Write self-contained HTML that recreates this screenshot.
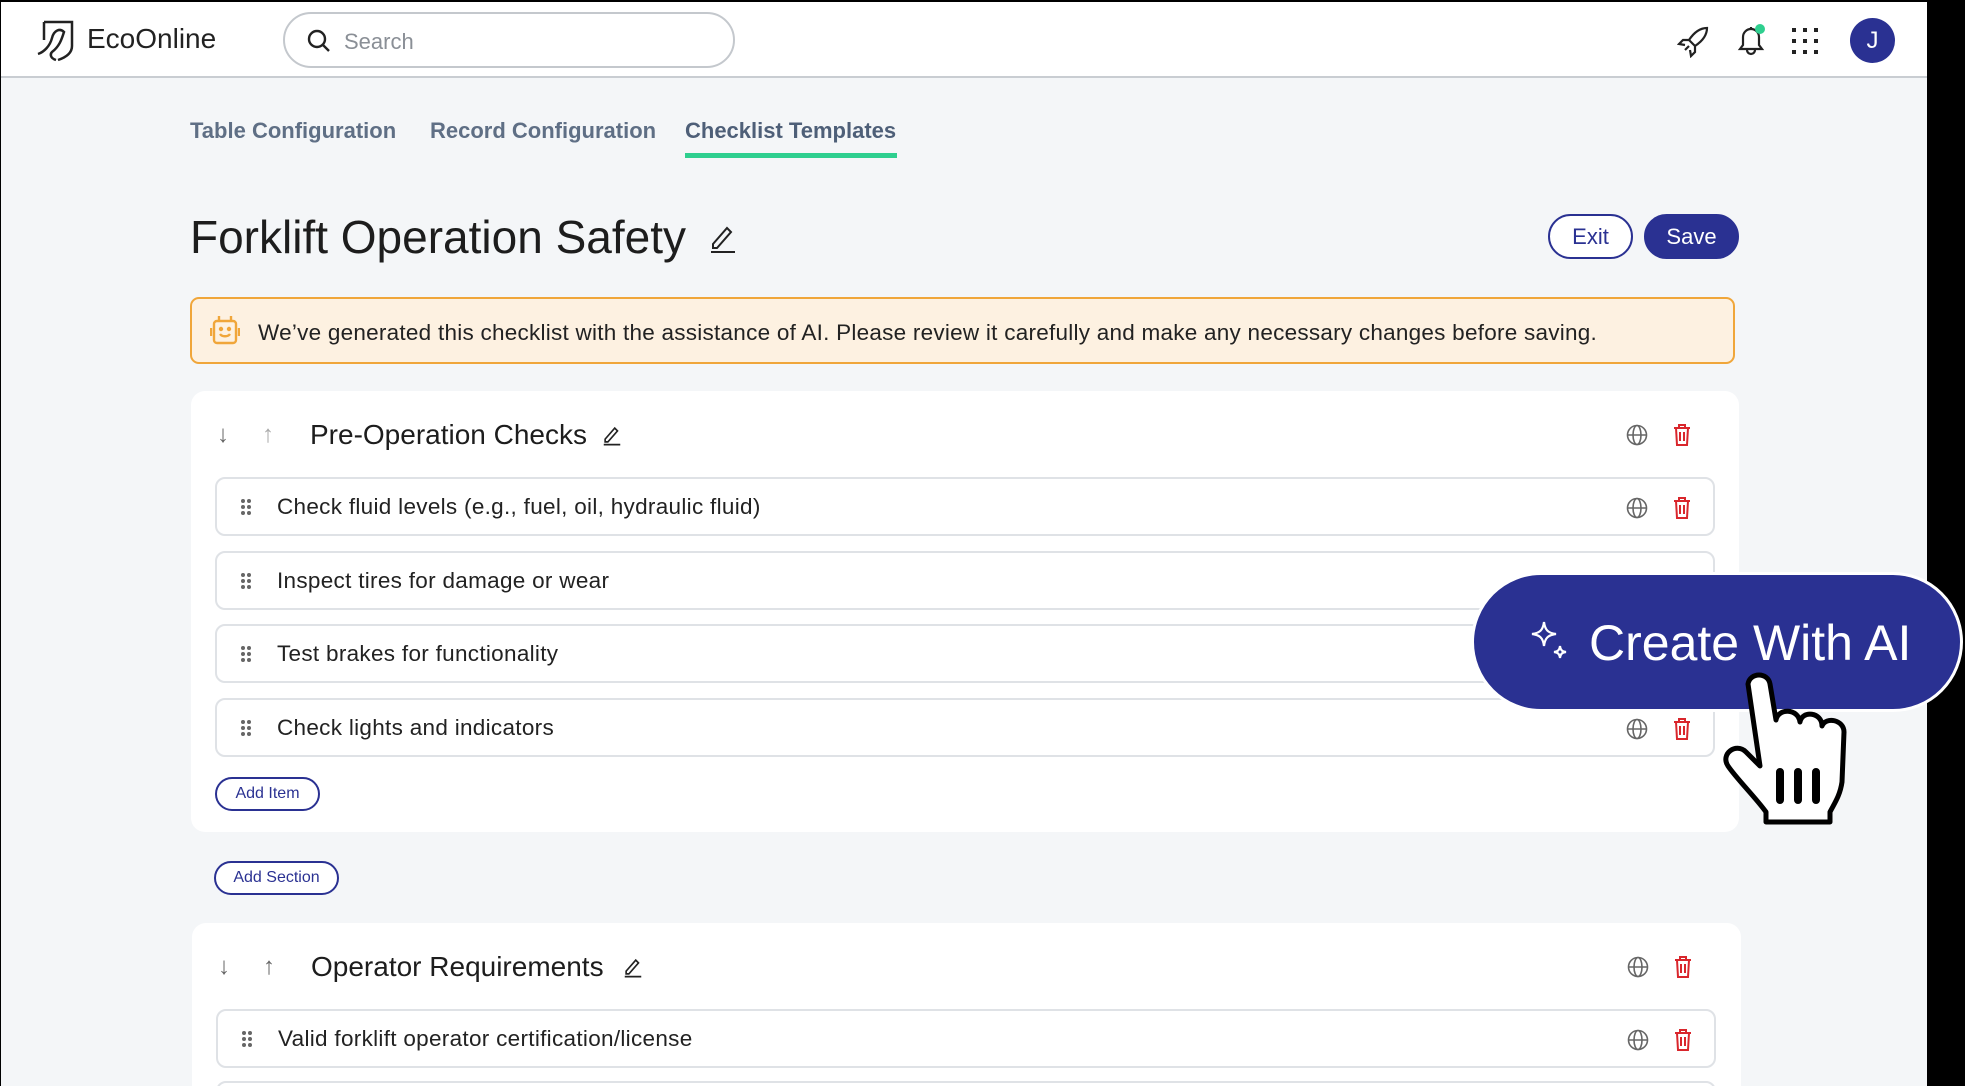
<!DOCTYPE html>
<html><head><meta charset="utf-8"><style>
*{box-sizing:border-box;margin:0;padding:0}
body{width:1965px;height:1086px;overflow:hidden;background:#000;font-family:"Liberation Sans",sans-serif;position:relative}
.page{position:absolute;left:1px;top:2px;width:1926px;height:1084px;background:#f4f6f8;overflow:hidden}
.hdr{position:absolute;left:0;top:0;width:1926px;height:76px;background:#fff;border-bottom:2px solid #c9cdd2}
.a{position:absolute}
.tab{position:absolute;top:116px;font-size:22px;font-weight:bold;color:#5f6f85}
.card{position:absolute;background:#fff;border-radius:14px}
.item{position:absolute;left:24px;width:1500px;height:59px;border:2px solid #dfe2e6;border-radius:10px;background:#fff}
.item .t{position:absolute;left:60px;top:15px;font-size:22.5px;color:#222;letter-spacing:0.3px}
.dots{position:absolute;left:24px;top:20px}
.btn{position:absolute;border:2px solid #2a3192;border-radius:20px;color:#2a3192;background:#fff;font-size:16px;text-align:center}
</style></head><body>
<div class="page">
<div class="hdr">
 <svg class="a" style="left:33px;top:16px" width="44" height="44" viewBox="0 0 44 44" fill="none" stroke="#222" stroke-width="2.5"><path d="M10 4h28v24c0 8-8 12-14 14M10 4v18M4 36c6-2 12-8 14-16 2-8 8-10 12-6-2 6-4 14-12 20-2 2-2 6 4 8"/></svg>
 <div class="a" style="left:86px;top:21px;font-size:28px;color:#222">EcoOnline</div>
 <div class="a" style="left:282px;top:10px;width:452px;height:56px;border:2px solid #c4c8cd;border-radius:28px"></div>
 <svg class="a" style="left:305px;top:26px" width="26" height="26" viewBox="0 0 26 26" fill="none" stroke="#222" stroke-width="2.4"><circle cx="11" cy="11" r="8"/><path d="M17 17l6 6"/></svg>
 <div class="a" style="left:343px;top:27px;font-size:22px;color:#8a8f96">Search</div>
 <svg class="a" style="left:1676px;top:22px" width="34" height="34" viewBox="0 0 34 34" fill="none" stroke="#222" stroke-width="2.2"><path d="M30 4c-8 0-14 6-18 12l6 6c6-4 12-10 12-18zM12 16l-6 0-4 4 6 1M18 22v6l-4 4-1-6M12 22l-4 4"/></svg>
 <svg class="a" style="left:1733px;top:20px" width="34" height="36" viewBox="0 0 34 36" fill="none" stroke="#222" stroke-width="2.2"><path d="M6 27h22l-3-4V15a8 8 0 0 0-16 0v8zM13 28a4 4 0 0 0 8 0M17 5v2"/><circle cx="26" cy="7" r="5" fill="#2ecf8f" stroke="none"/></svg>
 <svg class="a" style="left:1790px;top:25px" width="28" height="28" viewBox="0 0 28 28" fill="#222"><rect x="1" y="1" width="4" height="4"/><rect x="12" y="1" width="4" height="4"/><rect x="23" y="1" width="4" height="4"/><rect x="1" y="12" width="4" height="4"/><rect x="12" y="12" width="4" height="4"/><rect x="23" y="12" width="4" height="4"/><rect x="1" y="23" width="4" height="4"/><rect x="12" y="23" width="4" height="4"/><rect x="23" y="23" width="4" height="4"/></svg>
 <div class="a" style="left:1849px;top:16px;width:45px;height:45px;border-radius:50%;background:#2a3192;color:#fff;font-size:24px;text-align:center;line-height:45px">J</div>
</div>
<div class="tab" style="left:189px">Table Configuration</div>
<div class="tab" style="left:429px">Record Configuration</div>
<div class="tab" style="left:684px;color:#4e5f78">Checklist Templates</div>
<div class="a" style="left:684px;top:151px;width:212px;height:5px;background:#2ecf8f"></div>
<div class="a" style="left:189px;top:208px;font-size:46px;color:#1d1d1d">Forklift Operation Safety</div>
<svg class="a" style="left:706px;top:220px" width="32" height="32" viewBox="0 0 32 32" fill="none" stroke="#222" stroke-width="2"><path d="M6 22l14-16 4 4-14 16H6zM4 30h24"/></svg>
<div class="btn" style="left:1547px;top:212px;width:85px;height:45px;border-radius:23px;font-size:22px;line-height:41px">Exit</div>
<div class="btn" style="left:1643px;top:212px;width:95px;height:45px;border-radius:23px;font-size:22px;line-height:41px;background:#2a3192;color:#fff">Save</div>
<div class="a" style="left:189px;top:295px;width:1545px;height:67px;background:#fdf1e1;border:2px solid #f0a63a;border-radius:9px"></div>
<svg class="a" style="left:209px;top:312px" width="30" height="34" viewBox="0 0 30 34" fill="none" stroke="#f0a63a" stroke-width="2.4"><rect x="4" y="7" width="22" height="22" rx="3"/><path d="M9 2v5M21 2v5M1 14v8M29 14v8M10 20c2 3 8 3 10 0"/><circle cx="11" cy="15" r="1" fill="#f0a63a"/><circle cx="19" cy="15" r="1" fill="#f0a63a"/></svg>
<div class="a" style="left:257px;top:318px;font-size:22.5px;color:#222;letter-spacing:0.25px">We’ve generated this checklist with the assistance of AI. Please review it carefully and make any necessary changes before saving.</div>

<div class="card" style="left:190px;top:389px;width:1548px;height:441px">
 <div class="a" style="left:26px;top:30px;font-size:24px;color:#666">↓</div>
 <div class="a" style="left:71px;top:30px;font-size:24px;color:#aaa">↑</div>
 <div class="a" style="left:119px;top:28px;font-size:28px;color:#1d1d1d">Pre-Operation Checks</div>
 <svg class="a" style="left:410px;top:33px" width="22" height="22" viewBox="0 0 32 32" fill="none" stroke="#222" stroke-width="2.4"><path d="M6 22l14-16 4 4-14 16H6zM4 30h24"/></svg>
 <svg class="a g" style="left:1435px;top:33px" width="22" height="22" viewBox="0 0 22 22" fill="none" stroke="#666" stroke-width="1.6"><circle cx="11" cy="11" r="9.5"/><ellipse cx="11" cy="11" rx="4" ry="9.5"/><path d="M1.5 11h19"/></svg>
 <svg class="a" style="left:1482px;top:33px" width="18" height="22" viewBox="0 0 18 22" fill="none" stroke="#d9262c" stroke-width="2"><path d="M1 4h16M6 4V1h6v3M3 4l1 17h10l1-17M7 8v9M11 8v9"/></svg>
 <div class="item" style="top:86px"><svg class="dots" width="10" height="16" fill="#666"><circle cx="2" cy="2" r="2"/><circle cx="8" cy="2" r="2"/><circle cx="2" cy="8" r="2"/><circle cx="8" cy="8" r="2"/><circle cx="2" cy="14" r="2"/><circle cx="8" cy="14" r="2"/></svg><div class="t">Check fluid levels (e.g., fuel, oil, hydraulic fluid)</div>
 <svg class="a" style="left:1409px;top:18px" width="22" height="22" viewBox="0 0 22 22" fill="none" stroke="#666" stroke-width="1.6"><circle cx="11" cy="11" r="9.5"/><ellipse cx="11" cy="11" rx="4" ry="9.5"/><path d="M1.5 11h19"/></svg>
 <svg class="a" style="left:1456px;top:18px" width="18" height="22" viewBox="0 0 18 22" fill="none" stroke="#d9262c" stroke-width="2"><path d="M1 4h16M6 4V1h6v3M3 4l1 17h10l1-17M7 8v9M11 8v9"/></svg></div>
 <div class="item" style="top:160px"><svg class="dots" width="10" height="16" fill="#666"><circle cx="2" cy="2" r="2"/><circle cx="8" cy="2" r="2"/><circle cx="2" cy="8" r="2"/><circle cx="8" cy="8" r="2"/><circle cx="2" cy="14" r="2"/><circle cx="8" cy="14" r="2"/></svg><div class="t">Inspect tires for damage or wear</div></div>
 <div class="item" style="top:233px"><svg class="dots" width="10" height="16" fill="#666"><circle cx="2" cy="2" r="2"/><circle cx="8" cy="2" r="2"/><circle cx="2" cy="8" r="2"/><circle cx="8" cy="8" r="2"/><circle cx="2" cy="14" r="2"/><circle cx="8" cy="14" r="2"/></svg><div class="t">Test brakes for functionality</div></div>
 <div class="item" style="top:307px"><svg class="dots" width="10" height="16" fill="#666"><circle cx="2" cy="2" r="2"/><circle cx="8" cy="2" r="2"/><circle cx="2" cy="8" r="2"/><circle cx="8" cy="8" r="2"/><circle cx="2" cy="14" r="2"/><circle cx="8" cy="14" r="2"/></svg><div class="t">Check lights and indicators</div>
 <svg class="a" style="left:1409px;top:18px" width="22" height="22" viewBox="0 0 22 22" fill="none" stroke="#666" stroke-width="1.6"><circle cx="11" cy="11" r="9.5"/><ellipse cx="11" cy="11" rx="4" ry="9.5"/><path d="M1.5 11h19"/></svg>
 <svg class="a" style="left:1456px;top:18px" width="18" height="22" viewBox="0 0 18 22" fill="none" stroke="#d9262c" stroke-width="2"><path d="M1 4h16M6 4V1h6v3M3 4l1 17h10l1-17M7 8v9M11 8v9"/></svg></div>
 <div class="btn" style="left:24px;top:386px;width:105px;height:34px;line-height:30px">Add Item</div>
</div>
<div class="btn" style="left:213px;top:859px;width:125px;height:34px;line-height:30px">Add Section</div>

<div class="card" style="left:191px;top:921px;width:1549px;height:200px">
 <div class="a" style="left:26px;top:30px;font-size:24px;color:#666">↓</div>
 <div class="a" style="left:71px;top:30px;font-size:24px;color:#666">↑</div>
 <div class="a" style="left:119px;top:28px;font-size:28px;color:#1d1d1d">Operator Requirements</div>
 <svg class="a" style="left:430px;top:33px" width="22" height="22" viewBox="0 0 32 32" fill="none" stroke="#222" stroke-width="2.4"><path d="M6 22l14-16 4 4-14 16H6zM4 30h24"/></svg>
 <svg class="a" style="left:1435px;top:33px" width="22" height="22" viewBox="0 0 22 22" fill="none" stroke="#666" stroke-width="1.6"><circle cx="11" cy="11" r="9.5"/><ellipse cx="11" cy="11" rx="4" ry="9.5"/><path d="M1.5 11h19"/></svg>
 <svg class="a" style="left:1482px;top:33px" width="18" height="22" viewBox="0 0 18 22" fill="none" stroke="#d9262c" stroke-width="2"><path d="M1 4h16M6 4V1h6v3M3 4l1 17h10l1-17M7 8v9M11 8v9"/></svg>
 <div class="item" style="top:86px"><svg class="dots" width="10" height="16" fill="#666"><circle cx="2" cy="2" r="2"/><circle cx="8" cy="2" r="2"/><circle cx="2" cy="8" r="2"/><circle cx="8" cy="8" r="2"/><circle cx="2" cy="14" r="2"/><circle cx="8" cy="14" r="2"/></svg><div class="t">Valid forklift operator certification/license</div>
 <svg class="a" style="left:1409px;top:18px" width="22" height="22" viewBox="0 0 22 22" fill="none" stroke="#666" stroke-width="1.6"><circle cx="11" cy="11" r="9.5"/><ellipse cx="11" cy="11" rx="4" ry="9.5"/><path d="M1.5 11h19"/></svg>
 <svg class="a" style="left:1456px;top:18px" width="18" height="22" viewBox="0 0 18 22" fill="none" stroke="#d9262c" stroke-width="2"><path d="M1 4h16M6 4V1h6v3M3 4l1 17h10l1-17M7 8v9M11 8v9"/></svg></div>
 <div class="item" style="top:158px"></div>
</div>
</div>
<div class="a" style="left:1471px;top:572px;width:492px;height:140px;border-radius:70px;background:#2a3192;border:3px solid #fff"></div>
<svg class="a" style="left:1530px;top:620px" width="44" height="44" viewBox="0 0 44 44" fill="none" stroke="#fff" stroke-width="2.2"><path d="M14 2c1 8 4 11 12 12-8 1-11 4-12 12-1-8-4-11-12-12 8-1 11-4 12-12zM30 26c.5 4 2 5.5 6 6-4 .5-5.5 2-6 6-.5-4-2-5.5-6-6 4-.5 5.5-2 6-6z"/></svg>
<div class="a" style="left:1589px;top:614px;font-size:50px;color:#fff">Create With AI</div>
<svg class="a" style="left:1718px;top:672px" width="144" height="154" viewBox="0 0 144 154" stroke="#000" stroke-width="5" stroke-linejoin="round"><path d="M30 12c2-12 20-12 22 0l6 36c2-12 22-12 24 2 2-12 22-10 22 4 4-10 22-6 22 6l-2 50c-2 14-8 22-12 30v10H48v-10c-10-14-30-34-38-46-8-12 8-24 18-14l14 14z" fill="#fff"/><path d="M62 100v28M80 100v28M98 100v28" stroke-width="8" stroke-linecap="round"/></svg>
</body></html>
